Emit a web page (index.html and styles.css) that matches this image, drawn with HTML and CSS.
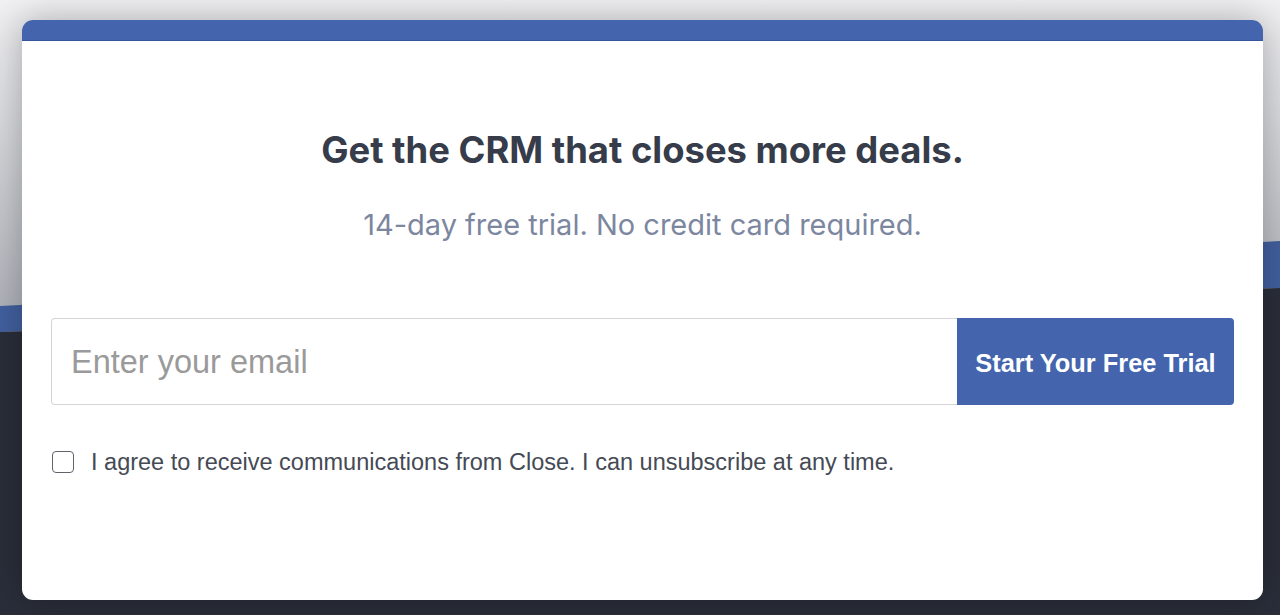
FILE: index.html
```html
<!DOCTYPE html>
<html lang="en">
<head>
<meta charset="utf-8">
<title>Get the CRM that closes more deals</title>
<link rel="stylesheet" href="styles.css">
</head>
<body>
<svg class="backdrop" viewBox="0 0 1280 615" preserveAspectRatio="none" aria-hidden="true">
  <defs>
    <linearGradient id="sky" x1="0" y1="0" x2="0" y2="1">
      <stop offset="0" stop-color="#f1f1f3"/>
      <stop offset="0.35" stop-color="#d9dade"/>
      <stop offset="1" stop-color="#a8abb3"/>
    </linearGradient>
  </defs>
  <rect x="0" y="0" width="1280" height="340" fill="url(#sky)"/>
  <polygon points="0,306 1280,241 1280,288 0,332" fill="#42609f"/>
  <polygon points="0,332 1280,288 1280,615 0,615" fill="#2a2e3a"/>
</svg>
<div class="stage">
  <div class="modal">
    <div class="modal-bar"></div>
    <div class="modal-body">
      <h1 class="title">Get the CRM that closes more deals.</h1>
      <p class="subtitle">14-day free trial. No credit card required.</p>
      <form class="signup">
        <input class="email" type="email" placeholder="Enter your email">
        <button class="cta" type="button">Start Your Free Trial</button>
      </form>
      <label class="consent">
        <span class="box"></span>
        <span class="consent-text">I agree to receive communications from Close. I can unsubscribe at any time.</span>
      </label>
    </div>
  </div>
</div>
</body>
</html>
```

FILE: styles.css
```css
* { box-sizing: border-box; }

html, body {
  margin: 0;
  height: 615px;
  overflow: hidden;
}

body {
  position: relative;
  background: #2a2e3a;
  font-family: "Liberation Sans", Arial, sans-serif;
}

.backdrop {
  position: absolute;
  left: 0;
  top: 0;
  width: 1280px;
  height: 615px;
  z-index: 0;
}

.stage {
  position: relative;
  z-index: 1;
  padding: 20px 17px 15px 22px;
}

.modal {
  width: 1241px;
  height: 580px;
  background: #ffffff;
  border-radius: 11px;
  overflow: hidden;
  box-shadow: 0 0 36px rgba(0, 0, 0, 0.28);
  display: flex;
  flex-direction: column;
}

.modal-bar {
  height: 21px;
  background: #4465ae;
  border-bottom: 1px solid #34559a;
  flex: none;
}

.modal-body {
  padding: 87px 29px 0 29px;
  display: flex;
  flex-direction: column;
}

.title {
  margin: 0;
  text-align: center;
  font-family: Inter, "Noto Sans", sans-serif;
  font-weight: 700;
  font-size: 36.4px;
  line-height: 44px;
  color: #363c4a;
}

.subtitle {
  margin: 35px 0 0 0;
  text-align: center;
  font-family: Inter, "Noto Sans", sans-serif;
  font-weight: 400;
  font-size: 29px;
  line-height: 36px;
  color: #7c879f;
}

.signup {
  margin: 75px 0 0 0;
  display: flex;
  height: 87px;
}

.email {
  flex: 1;
  height: 87px;
  border: 1px solid #d5d5d7;
  border-right: none;
  border-radius: 4px 0 0 4px;
  padding: 2px 19px 0 19px;
  font-family: "Liberation Sans", Arial, sans-serif;
  font-size: 32.5px;
  color: #333;
  outline: none;
  background: #fff;
}

.email::placeholder {
  color: #9a9a9a;
}

.cta {
  width: 277px;
  flex: none;
  height: 87px;
  border: none;
  border-radius: 0 4px 4px 0;
  background: #4465ae;
  color: #ffffff;
  font-family: "Liberation Sans", Arial, sans-serif;
  font-weight: 700;
  font-size: 25.4px;
  padding: 3px 0 0 0;
}

.consent {
  margin: 45px 0 0 1px;
  display: flex;
  align-items: center;
  gap: 17px;
  height: 24px;
}

.box {
  width: 22px;
  height: 22px;
  border: 1.5px solid #5f636b;
  border-radius: 4px;
  background: #fff;
  flex: none;
}

.consent-text {
  font-family: "Liberation Sans", Arial, sans-serif;
  font-size: 23.5px;
  line-height: 24px;
  color: #454a55;
}
```
